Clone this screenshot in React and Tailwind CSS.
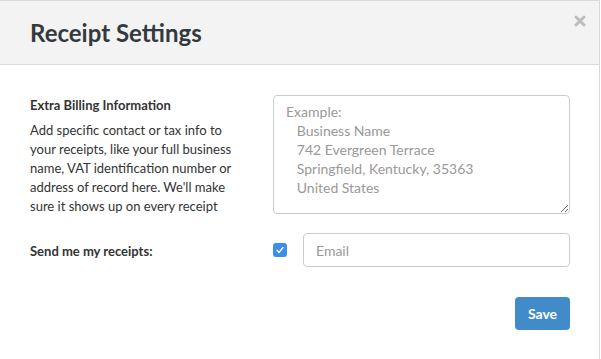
export default function App() {
  return (
    <div className="w-[601px] h-[359px] bg-white" style={{ fontFamily: "Lato, 'Open Sans', sans-serif" }}>
      <div className="w-[600px] h-[359px] border-t border-r border-[#d9d9d9] flex flex-col">
        <div className="h-[64px] bg-[#f3f3f3] border-b border-[#dcdcdc] flex items-center pl-[30px] relative">
          <h1 className="text-[24px] font-bold text-[#34393e] leading-none mt-[1px]">Receipt Settings</h1>
          <svg className="absolute right-[13px] top-[14px]" width="12" height="12" viewBox="0 0 12 12">
            <path d="M2 2 L10 10 M10 2 L2 10" stroke="#bdbdbd" strokeWidth="3" strokeLinecap="round" />
          </svg>
        </div>
        <div className="flex flex-col pl-[30px] pr-[29px] pt-[30px]">
          <div className="flex justify-between">
            <div className="w-[210px] pt-[1px]">
              <div className="text-[13px] font-bold text-[#333] leading-[19px]">Extra Billing Information</div>
              <p className="mt-[6px] text-[13px] text-[#333] leading-[19px]">
                Add specific contact or tax info to your receipts, like your full business name, VAT identification number or address of record here. We'll make sure it shows up on every receipt
              </p>
            </div>
            <textarea
              className="w-[297px] h-[119px] border border-[#cccccc] rounded-[4px] px-[12px] py-[6px] text-[14px] leading-[19px] text-[#555] placeholder:text-[#999] outline-none"
              placeholder={"Example:\n   Business Name\n   742 Evergreen Terrace\n   Springfield, Kentucky, 35363\n   United States"}
            />
          </div>
          <div className="flex items-center mt-[17px]">
            <div className="w-[243px] text-[13px] font-bold text-[#333] mt-[3px]">Send me my receipts:</div>
            <div className="w-[14px] h-[14px] rounded-[3px] bg-[#3b8eea] flex items-center justify-center mb-[1px]">
              <svg width="10" height="10" viewBox="0 0 10 10"><path d="M2 5.2 L4 7.5 L8 2.5" stroke="white" strokeWidth="1.4" fill="none" strokeLinecap="round" strokeLinejoin="round" /></svg>
            </div>
            <input
              className="ml-[16px] w-[267px] h-[34px] border border-[#cccccc] rounded-[4px] px-[12px] text-[14px] text-[#555] placeholder:text-[#999] outline-none"
              placeholder="Email"
            />
          </div>
          <div className="flex justify-end mt-[30px]">
            <button className="w-[55px] h-[33px] bg-[#428bca] rounded-[4px] text-white text-[14px] font-bold">Save</button>
          </div>
        </div>
      </div>
    </div>
  );
}
